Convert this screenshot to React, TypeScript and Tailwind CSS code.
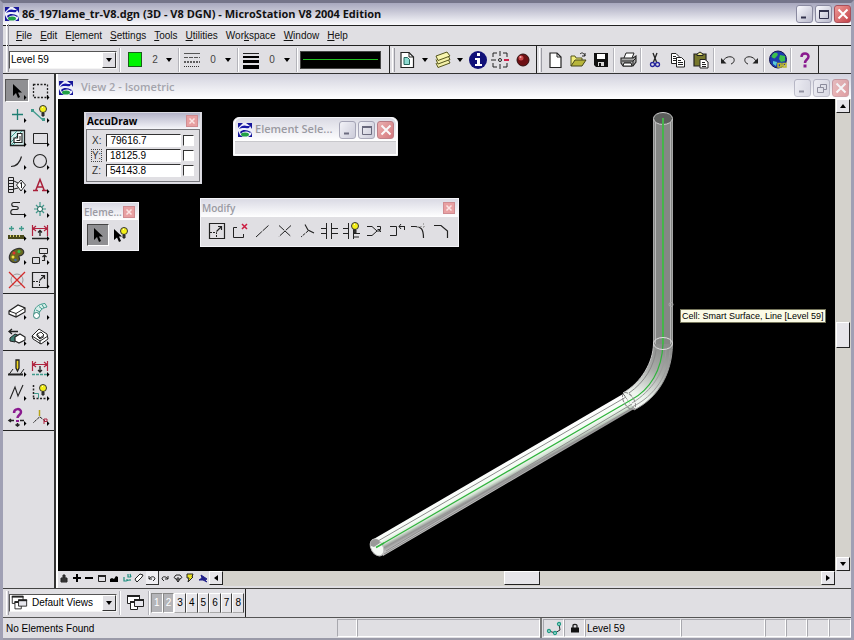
import { ReactNode } from "react";

interface IconProps {
  children: ReactNode;
  size?: number;
  box?: number;
  smooth?: boolean;
}

/* 20x20 drawing grid shared by every toolbar glyph */
function Icon({ children, size = 20, box = 20, smooth = true }: IconProps) {
  return (
    <svg
      width={size}
      height={size}
      viewBox={`0 0 ${box} ${box}`}
      fill="none"
      stroke="#222"
      strokeWidth="1"
      shapeRendering={smooth ? "auto" : "crispEdges"}
      className="block shrink-0"
      aria-hidden="true"
    >
      {children}
    </svg>
  );
}

const teal = "#3f9a8c";

/* ---------- shared drawings ---------- */

function Logo() {
  return (
    <Icon size={16} box={16}>
      <rect x="1" y="1" width="14" height="14" fill="#eef0fb" stroke="none" />
      <path d="M1 1H6L3 4L1 6ZM9 1H15V7L13 4ZM1 9L3 13L6 15H1ZM15 10V15H11L14 13Z" fill="#16169a" stroke="none" />
      <path d="M2 7C4 3 8 3 10 4L13 4L12 6C9 7 6 5 2 7Z" fill="#1717a8" stroke="none" />
      <path d="M3 10C6 7 10 8 14 10L13 11C10 9 6 9 4 12Z" fill="#16169a" stroke="none" />
      <ellipse cx="8" cy="12.500" rx="4" ry="2" fill="#22a045" stroke="none" />
    </Icon>
  );
}

const cursorPath = "M6 3V15L9 12L11 17L13 16L11 11.500H15Z";

const pointer = <path d={cursorPath} fill="#000" stroke="none" />;

function Bulb({ x, y }: { x: number; y: number }) {
  return (
    <g transform={`translate(${x} ${y})`}>
      <circle cx="4" cy="4" r="3.500" fill="#f4f018" stroke="#333" />
      <path d="M3 8H5V11H3Z" fill="#444" stroke="#222" />
      <path d="M3 2.500L4 2" stroke="#fff" />
    </g>
  );
}

const scaleBox = (
  <>
    <path d="M2.500 2.500H17.500V17.500H2.500Z" strokeWidth="1.200" />
    <path d="M3 11.500H9.500V17" strokeDasharray="2 1" />
    <path d="M9.500 10.500L14.500 5.500M11 5.500H14.500V9" strokeWidth="1.200" />
  </>
);

const cascade = (
  <>
    <path d="M2.500 2.500H14.500V10.500H2.500Z" fill="#fff" />
    <path d="M2 3H15" strokeWidth="2" />
    <path d="M5.500 8.500H12.500V16.500H5.500Z" fill="#fff" />
    <path d="M5 9H13" strokeWidth="2" />
    <path d="M9.500 6.500H18.500V13.500H9.500Z" fill="#e8e8ee" />
    <path d="M9 7H19" strokeWidth="2" />
  </>
);

/* ---------- left tool palette ---------- */

interface Tool {
  name: string;
  art: ReactNode;
  active?: boolean;
}

const mainTools: Tool[] = [
  { name: "Element Selection", art: pointer, active: true },
  { name: "Fence", art: <path d="M3.500 3.500H17.500V16.500H3.500Z" strokeDasharray="2 1.500" strokeWidth="1.300" /> },
  { name: "Points", art: <path d="M10.500 5V16M5 10.500H16" stroke="#1f7f73" strokeWidth="1.300" /> },
  {
    name: "Linear Elements",
    art: (
      <>
        <path d="M3 7L13 16" stroke={teal} strokeWidth="1.300" />
        <path d="M1 5H4V8H1ZM12 14H15V17H12Z" fill={teal} stroke="none" />
        <Bulb x={9} y={1} />
      </>
    ),
  },
  {
    name: "Patterns",
    art: (
      <>
        <path d="M3.500 2.500H17.500V17.500H3.500Z" fill="#d6eeee" strokeWidth="1.300" />
        <path d="M4 9L10 3M4 14L15 3M6 17L9 14M4 17L8 13" stroke={teal} />
        <path d="M7 14.500V10H10.500V5.500H15V14.500Z" fill="#fff" strokeWidth="1.200" />
        <path d="M9.500 12.500H13V8" />
      </>
    ),
  },
  { name: "Polygons", art: <path d="M3.500 5.500H17.500V15.500H3.500Z" /> },
  { name: "Arcs", art: <path d="M4 15.500C10 15.500 13 11 14.500 5.500" strokeWidth="1.200" /> },
  { name: "Ellipses", art: <circle cx="10" cy="10" r="6.500" strokeWidth="1.100" /> },
  {
    name: "Tags",
    art: (
      <>
        <path d="M1.500 2.500H6.500V17.500H1.500ZM1.500 5.500H6.500M1.500 8.500H6.500M1.500 11.500H6.500M1.500 14.500H6.500" />
        <path d="M7 6L11 8M7 14L11 13" />
        <path d="M14 5L18.500 10L14 16L9.500 10Z" fill="#fff" />
        <path d="M13 8.500L14.500 7.500V13" />
      </>
    ),
  },
  { name: "Text", art: <path d="M5.500 16L10 4.500L14.500 16M7 12H13M3 15.500H8M12 15.500H17" stroke="#a91e38" strokeWidth="1.500" /> },
  { name: "Groups", art: <path d="M13 3.500H7C4 3.500 4 7.500 7 7.500H9C12 7.500 12 10.500 9 10.500H6C3 11 3 15.500 6 15.500H17" strokeWidth="1.100" /> },
  {
    name: "Cells",
    art: (
      <>
        <path d="M10 3V17M4 10H16M6 6L14 14M14 6L6 14" stroke={teal} strokeWidth="1.200" />
        <circle cx="10" cy="10" r="2.500" fill="#fff" stroke="#1f5f55" />
      </>
    ),
  },
  {
    name: "Measure",
    art: (
      <>
        <path d="M4.500 4V9M2 6.500H7M14.500 4V9M12 6.500H17" stroke={teal} strokeWidth="1.300" />
        <path d="M1 13H17V17H1Z" fill="#4a4a1c" stroke="none" />
        <path d="M3.500 13V15M6.500 13V15M9.500 13V15M12.500 13V15" stroke="#d8d06a" />
      </>
    ),
  },
  {
    name: "Dimensions",
    art: (
      <>
        <path d="M2.500 3V14M17.500 3V14M3 6.500H17M6 4L3 6.500L6 9M14 4L17 6.500L14 9" stroke="#b02440" strokeWidth="1.200" />
        <path d="M10 14V8M8 10.500L10 8.500L12 10.500M2 16.500H18" strokeWidth="1.300" />
      </>
    ),
  },
  {
    name: "Change Attributes",
    art: (
      <>
        <path d="M9 3C15 1 18 5 16 8S11 9 12 11C14 15 9 18 5 16S1 6 9 3Z" fill="#6a6a20" stroke="#333" strokeWidth="1.200" />
        <circle cx="7" cy="7" r="1.500" fill="#d33" stroke="none" />
        <circle cx="12" cy="5.500" r="1.500" fill="#3ac04c" stroke="none" />
        <circle cx="6" cy="11" r="1.500" fill="#f0e040" stroke="none" />
        <circle cx="8.500" cy="14" r="1.300" fill="#46a" stroke="none" />
      </>
    ),
  },
  {
    name: "Manipulate",
    art: (
      <>
        <path d="M9.500 2.500H17.500V7.500H9.500ZM2.500 11.500H9.500V17.500H2.500Z" />
        <path d="M12 14.500H14.500V9M12.500 11L14.500 9L16.500 11" strokeWidth="1.200" />
      </>
    ),
  },
  {
    name: "Delete Element",
    art: (
      <>
        <circle cx="10" cy="10" r="6" stroke="#999" />
        <path d="M2 2L18 18M18 2L2 18" stroke="#d42a2a" strokeWidth="1.300" />
      </>
    ),
  },
  { name: "Modify", art: scaleBox },
];

const solidTools: Tool[] = [
  {
    name: "3D Primitives",
    art: (
      <>
        <path d="M2 10L11 4L18 7V11L9 16L2 13Z" fill="#fff" strokeWidth="1.200" />
        <path d="M2 10L9 12.500L18 7M9 12.500V16" />
      </>
    ),
  },
  {
    name: "3D Free-form Surfaces",
    art: (
      <>
        <path d="M4 13C4 6 9 3 15 2.500L17 6C12 7 9 10 9 14" fill="#d9eeea" stroke={teal} />
        <path d="M6 9L10 11M9 5.500L12 8M12 3.500L14 7" stroke={teal} />
        <circle cx="6.500" cy="14.500" r="3" fill="#fff" stroke="#2c8173" />
      </>
    ),
  },
  {
    name: "3D Modify",
    art: (
      <>
        <path d="M2 4.500H11M5 2L2 4.500L5 7" strokeWidth="1.300" />
        <path d="M3 11L8 7L13 9L8 15L3 14Z" fill="#3f7f74" />
        <path d="M8 10L13 7L18 10V13L12 16L8 14Z" fill="#fff" strokeWidth="1.200" />
      </>
    ),
  },
  {
    name: "Surface Modeling",
    art: (
      <>
        <path d="M2 9L9 2L17 7L18 12L11 17L3 12Z" fill="#fff" />
        <path d="M2 9L10 14L18 9M10 14V17M7 7L11 5L14 8L10 11ZM7 7V9L10 12L14 9.500" />
      </>
    ),
  },
];

const drawingTools: Tool[] = [
  {
    name: "DD Design",
    art: (
      <>
        <path d="M9 2H12V10L10.500 13L9 10Z" fill="#f0d820" strokeWidth="1.300" />
        <path d="M6 11L2 16.500H13L17 11" />
        <path d="M1 16.500H16" strokeWidth="2" />
      </>
    ),
  },
  {
    name: "Constraints",
    art: (
      <>
        <path d="M2.500 3V13M17.500 3V13M3 6.500H17M6 4L3 6.500L6 9M14 4L17 6.500L14 9" stroke="#b02440" strokeWidth="1.200" />
        <path d="M10 8V14M8 12L10 14L12 12" strokeWidth="1.300" />
        <path d="M2 16.500H18" stroke={teal} strokeDasharray="3 1" strokeWidth="1.500" />
      </>
    ),
  },
  { name: "Stretch Lines", art: <path d="M3 17L8 5L11 14L16 3" strokeWidth="1.100" /> },
  {
    name: "Modify Values",
    art: (
      <>
        <path d="M3.500 3V17" strokeDasharray="2 1.500" strokeWidth="1.500" />
        <path d="M3 16.500H17" strokeDasharray="2 1.500" strokeWidth="1.500" />
        <path d="M4 11.500H8.500V16" stroke={teal} />
        <Bulb x={9} y={2} />
      </>
    ),
  },
  {
    name: "Describe",
    art: (
      <>
        <path d="M7 6C7 1 14 1 14 5C14 8 10.500 8 10.500 11" stroke="#8a1a8f" strokeWidth="2.500" />
        <path d="M9 13H12V15H9Z" fill="#8a1a8f" stroke="none" />
        <path d="M2 13.500H7M13 13.500H17M4 12L2 13.500L4 15M8.500 17.500L10.500 19L12.500 17.500M10.500 16V19" strokeWidth="1.500" />
      </>
    ),
  },
  {
    name: "Dimension Driven Axes",
    art: (
      <>
        <path d="M9.500 10L3 16M10 10L15 14" strokeDasharray="3 1" />
        <path d="M9.500 3V9" stroke="#b8a418" strokeWidth="1.500" />
        <path d="M14 17V12H17V14.500H14" stroke="#b02440" />
      </>
    ),
  },
];

function ToolGroup({ tools, className }: { tools: Tool[]; className: string }) {
  return (
    <div className={`grid grid-cols-2 content-between border-b border-[#222] px-[2px] pt-[5px] pb-[2px] ${className}`}>
      {tools.map((tool) => (
        <button
          key={tool.name}
          aria-label={tool.name}
          className={`relative flex h-[23px] items-center justify-center ${
            tool.active ? "border border-t-[#555] border-l-[#555] border-r-white border-b-white bg-[#8f8f92]" : ""
          }`}
        >
          <Icon>
            {tool.art}
            {tool.name !== "Delete Element" && <path d="M17 14V19L19.500 16.500Z" fill="#000" stroke="none" />}
          </Icon>
        </button>
      ))}
    </div>
  );
}

/* ---------- window chrome ---------- */

type Faded = "no" | "soft" | "strong";

function CaptionButton({ kind, faded = "no" }: { kind: "min" | "max" | "restore" | "close"; faded?: Faded }) {
  const look =
    kind === "close"
      ? "from-[#ee9a98] to-[#c4414a] border-[#a8505a]"
      : "from-[#fbfbff] to-[#b9b9cb] border-[#8a8aa0]";
  const fade = faded === "strong" ? "opacity-50" : faded === "soft" ? "opacity-70" : "";
  return (
    <button
      aria-label={kind}
      className={`flex h-[18px] w-[17px] items-center justify-center rounded-[3px] border bg-gradient-to-br ${look} ${fade}`}
    >
      <Icon size={14} box={14}>
        {kind === "min" && <path d="M3 10.500H8" stroke="#33334d" strokeWidth="2" />}
        {kind === "max" && (
          <>
            <path d="M2.500 3.500H11.500V11.500H2.500Z" stroke="#33334d" />
            <path d="M2 4H12" stroke="#33334d" strokeWidth="2" />
          </>
        )}
        {kind === "restore" && <path d="M5.500 6V3.500H11.500V8.500H9M2.500 6.500H8.500V11.500H2.500Z" stroke="#33334d" />}
        {kind === "close" && <path d="M2.500 2.500L11.500 11.500M11.500 2.500L2.500 11.500" stroke="#fff" strokeWidth="2" />}
      </Icon>
    </button>
  );
}

function SmallClose({ label }: { label: string }) {
  return (
    <button
      aria-label={label}
      className="flex h-[12px] w-[12px] items-center justify-center border border-[#d08c92] bg-[#e8a0a2]"
    >
      <Icon size={8} box={8}>
        <path d="M1.500 1.500L6.500 6.500M6.500 1.500L1.500 6.500" stroke="#fbe6e6" strokeWidth="1.500" />
      </Icon>
    </button>
  );
}

function Caret() {
  return (
    <span className="flex w-[14px] shrink-0 justify-center">
      <svg width="6" height="4" viewBox="0 0 6 4" aria-hidden="true">
        <path d="M0 0H6L3 4Z" fill="#000" />
      </svg>
    </span>
  );
}

function Divider({ wide }: { wide?: boolean }) {
  return (
    <div className={`h-6 w-[2px] shrink-0 border-l border-[#b4b4ba] bg-white ${wide ? "mx-[2px]" : "mx-[1px]"}`} />
  );
}

function Grip() {
  return <div className="h-6 w-[3px] shrink-0 border-x border-l-white border-r-[#9c9ca4]" />;
}

function Combo({ label, value, icon }: { label: string; value: string; icon?: ReactNode }) {
  return (
    <div className="relative flex h-[18px] w-[108px] border border-t-[#555] border-l-[#555] border-r-[#f4f4f4] border-b-[#f4f4f4] bg-white">
      {icon && <span className="absolute left-0 -top-px">{icon}</span>}
      <select
        aria-label={label}
        className={`w-full appearance-none bg-transparent text-[10px] leading-4 text-black outline-none ${icon ? "pl-[22px]" : "pl-[1px]"}`}
      >
        <option>{value}</option>
      </select>
      <span className="pointer-events-none absolute right-0 flex h-4 w-[14px] items-center justify-center border border-t-white border-l-white border-r-[#333] border-b-[#333] bg-[#e0dfe3]">
        <Caret />
      </span>
    </div>
  );
}

/* ---------- main toolbar ---------- */

function ToolButton({ name, narrow, children }: { name: string; narrow?: boolean; children: ReactNode }) {
  return (
    <button
      aria-label={name}
      className={`flex h-6 shrink-0 items-center justify-center ${narrow ? "w-[21px]" : "w-[23px]"}`}
    >
      <Icon>{children}</Icon>
    </button>
  );
}

function AttributesBar() {
  return (
    <div className="flex items-center border-r border-[#222] pl-[3px]">
      <Grip />
      <Combo label="Active Level" value="Level 59" />
      <Divider wide />
      <button aria-label="Active Color" className="flex items-center">
        <span className="ml-[5px] h-[15px] w-[14px] border border-[#1c5c1c] bg-[#00f400]" />
        <span className="ml-[6px] w-[14px] text-center text-[10px] text-[#444]">2</span>
        <Caret />
      </button>
      <Divider wide />
      <button aria-label="Active Line Style" className="flex items-center">
        <Icon>
          <path d="M2 3.500H18" stroke="#555" />
          <path d="M2 7.500H18" stroke="#555" strokeDasharray="4 1" />
          <path d="M2 12H18" stroke="#333" strokeWidth="1.500" strokeDasharray="2 1" />
          <path d="M2 16.500H18" stroke="#333" strokeDasharray="1 1" />
        </Icon>
        <span className="ml-[3px] w-4 text-center text-[10px] text-[#444]">0</span>
        <Caret />
      </button>
      <Divider wide />
      <button aria-label="Active Line Weight" className="flex items-center">
        <Icon smooth={false}>
          <path d="M2 3.500H18" />
          <path d="M2 7H18" stroke="#000" strokeWidth="2" />
          <path d="M2 11.500H18" stroke="#000" strokeWidth="3" />
          <path d="M2 17H18" stroke="#000" strokeWidth="4" />
        </Icon>
        <span className="ml-[3px] w-4 text-center text-[10px] text-[#444]">0</span>
        <Caret />
      </button>
      <Divider wide />
      <div className="mr-2 flex h-[18px] w-[81px] items-center border border-[#444] bg-black px-[2px]">
        <div className="h-px w-full bg-[#22c022]" />
      </div>
    </div>
  );
}

function PrimaryBar() {
  return (
    <div className="flex items-center border-r border-[#222] pl-[2px]">
      <Grip />
      <ToolButton name="Models">
        <path d="M4 2.500H12L16.500 7V17.500H4Z" fill="#fff" strokeWidth="1.200" />
        <path d="M12 2.500V7H16.500" />
        <path d="M7 7.500H10.500L12.500 9.500V14.500H7Z" fill="#8edbd2" stroke="#26665c" />
      </ToolButton>
      <Caret />
      <ToolButton name="References" narrow>
        <path d="M3 13L5 17.500L17 13L15 9" fill="#f4f0a8" stroke="#55551c" />
        <path d="M3 9.500L5 14L17 9.500L15 5.500" fill="#f4f0a8" stroke="#55551c" />
        <path d="M3 6L14 2L17 6L5 10.500Z" fill="#f8f5b0" stroke="#55551c" />
      </ToolButton>
      <Caret />
      <ToolButton name="Element Information" narrow>
        <circle cx="10" cy="10" r="9" fill="#101078" stroke="none" />
        <path d="M9 3H12V6H9ZM7 8H12V14H14V16H7V14H9V10H7Z" fill="#fff" stroke="none" />
      </ToolButton>
      <ToolButton name="Toggle AccuDraw">
        <path d="M3 7V3H7M13 3H17V7M17 13V17H13M7 17H3V13M10 1V6M10 14V19M1 10H6" />
        <path d="M14 10H19" stroke="#d0204a" strokeWidth="2" />
        <circle cx="10" cy="10" r="1.500" />
      </ToolButton>
      <ToolButton name="Popset">
        <circle cx="10" cy="10" r="6" fill="#6e1014" stroke="#301010" />
        <circle cx="8" cy="8" r="2.500" fill="#c9484a" stroke="none" />
        <circle cx="7.500" cy="7" r="1" fill="#f3b0b0" stroke="none" />
      </ToolButton>
      <div className="w-[2px]" />
    </div>
  );
}

function StandardBar() {
  return (
    <div className="flex items-center border-r border-[#222] pl-[2px]">
      <Grip />
      <div className="w-[1px]" />
      <ToolButton name="New File">
        <path d="M5 3H12L16 7V17.500H5Z" fill="#fff" strokeWidth="1.200" />
        <path d="M12 3V7H16" />
      </ToolButton>
      <ToolButton name="Open File">
        <path d="M3 16V6H7L8 8H14V10" fill="#f2ee7c" stroke="#55551c" />
        <path d="M3 16L7 10H18L14 16Z" fill="#b7b53a" stroke="#44441a" />
        <path d="M12 4C14 2 16 3 17 6M17 3V6H14" />
      </ToolButton>
      <ToolButton name="Save Settings">
        <path d="M3 3H17V17H5L3 15Z" fill="#111" stroke="none" />
        <path d="M6 4H14V9H6Z" fill="#fff" stroke="none" />
        <path d="M7 12H13V16H7Z" fill="#d8d8d8" stroke="none" />
        <path d="M8 13H10V16H8Z" fill="#111" stroke="none" />
      </ToolButton>
      <Divider />
      <ToolButton name="Print">
        <path d="M6 8L8 3H16L14 8" fill="#fff" />
        <path d="M3 8H15L18 6V12L15 16H5L3 13Z" fill="#aaa" strokeWidth="1.100" />
        <path d="M4 11H15L18 8M6 13H13M15 11V16" />
        <path d="M5 16L6 13H13L14 16Z" fill="#fff" />
      </ToolButton>
      <Divider />
      <ToolButton name="Cut">
        <path d="M8 3L11.500 12M12 3L8.500 12" strokeWidth="1.300" />
        <circle cx="7.500" cy="14.500" r="2" stroke="#26269e" strokeWidth="1.300" />
        <circle cx="12.500" cy="14.500" r="2" stroke="#26269e" strokeWidth="1.300" />
      </ToolButton>
      <ToolButton name="Copy">
        <path d="M3.500 3.500H8L11 6.500V13.500H3.500Z" fill="#fff" />
        <path d="M5 6.500H8M5 8.500H9M5 10.500H9" />
        <path d="M8.500 7.500H13.500L16.500 10.500V17H8.500Z" fill="#fff" />
        <path d="M10 10.500H13M10 12.500H15M10 14.500H15" />
      </ToolButton>
      <ToolButton name="Paste">
        <path d="M3 4H15V16H3Z" fill="#77772c" strokeWidth="1.200" />
        <path d="M6 5.500V4L9 2L12 4V5.500Z" fill="#e6e28a" />
        <path d="M9 9.500H14L17 12V18H9Z" fill="#fff" />
        <path d="M11 12.500H14M11 14.500H15M11 16.500H15" />
      </ToolButton>
      <Divider />
      <ToolButton name="Undo">
        <path d="M5 11C8 6 13 6 15.500 8C17 10 16 13 13 14" />
        <path d="M3 8V13.500H8.500Z" fill="#222" stroke="none" />
      </ToolButton>
      <ToolButton name="Redo">
        <path d="M15 11C12 6 7 6 4.500 8C3 10 4 13 7 14" />
        <path d="M17 8V13.500H11.500Z" fill="#222" stroke="none" />
      </ToolButton>
      <Divider />
      <ToolButton name="Connect Web Browser">
        <circle cx="10" cy="9.500" r="8.500" fill="#1c3cae" stroke="#151550" />
        <path d="M6 3C9 2 11 4 9 6S7 9 5 8S3 6 6 3Z" fill="#3cc04c" stroke="none" />
        <path d="M12 5L17 6L17 11L13 12L11 9Z" fill="#3cc04c" stroke="none" />
        <path d="M5 11L9 12L8 16L5 14Z" fill="#57c8d8" stroke="none" />
        <path d="M10 13.500H13V17H10ZM15 13.500H18V17H15ZM12 15.500H16" stroke="#b9b530" strokeWidth="1.500" />
      </ToolButton>
      <Divider />
      <ToolButton name="Help">
        <path d="M6.500 7C6.500 2.500 13.500 2.500 13.500 6.500C13.500 9.500 10 9.500 10 13" stroke="#8a1a8f" strokeWidth="2.500" />
        <path d="M8.500 14.500H11.500V17.500H8.500Z" fill="#8a1a8f" stroke="none" />
      </ToolButton>
      <div className="w-[2px]" />
    </div>
  );
}

/* ---------- floating tool boxes ---------- */

function AccuDraw() {
  const rows = [
    { axis: "X", value: "79616.7" },
    { axis: "Y", value: "18125.9" },
    { axis: "Z", value: "54143.8" },
  ];
  return (
    <section className="absolute top-[13px] left-[26px] w-[118px] border border-[#d8d8e0] bg-[#e0dfe3] px-px pb-px">
      <header className="flex h-[16px] items-center justify-between bg-gradient-to-b from-[#b4b4c8] to-[#f6f6fa] pr-[2px] pl-[1px]">
        <h2 className="font-['Open_Sans',sans-serif] text-[10px] leading-4 font-bold text-black">AccuDraw</h2>
        <SmallClose label="Close AccuDraw" />
      </header>
      <div className="flex flex-col gap-[2px] border border-[#77777c] px-[5px] py-[4px]">
        {rows.map((row) => (
          <div key={row.axis} className="flex h-[13px] items-center">
            <label
              htmlFor={`axis-${row.axis}`}
              className={`w-[10px] text-center text-[10px] leading-[11px] text-[#333] ${row.axis === "Y" ? "outline outline-dotted outline-[#444]" : ""}`}
            >
              {row.axis}:
            </label>
            <input
              id={`axis-${row.axis}`}
              defaultValue={row.value}
              className="ml-[5px] h-[13px] w-[75px] border border-t-[#333] border-l-[#333] border-r-white border-b-white bg-white pl-[3px] text-[10px] leading-[11px] outline-none"
            />
            <input
              type="checkbox"
              aria-label={`Lock ${row.axis}`}
              className="ml-[2px] h-[11px] w-[11px] shrink-0 appearance-none border border-t-[#333] border-l-[#333] border-r-white border-b-white bg-white"
            />
          </div>
        ))}
      </div>
    </section>
  );
}

function ElementSelection() {
  return (
    <section className="absolute top-[18px] left-[175px] w-[165px] rounded-t-md border border-[#f4f4f8] bg-white px-px pb-px">
      <header className="flex h-[23px] items-center gap-[2px] rounded-t-md bg-gradient-to-b from-[#dadae4] to-white px-[2px]">
        <Logo />
        <h2 className="flex-1 truncate font-['Open_Sans',sans-serif] text-[11px] font-semibold text-[#9a9aa2]">
          Element Sele...
        </h2>
        <CaptionButton kind="min" faded="soft" />
        <CaptionButton kind="max" faded="soft" />
        <CaptionButton kind="close" faded="soft" />
      </header>
      <div className="h-[13px] border-t border-[#c8c8cc] bg-[#e0dfe3]" />
    </section>
  );
}

function ElementsBox() {
  return (
    <section className="absolute top-[103px] left-[24px] w-[57px] border border-[#f4f4f8] bg-[#e0dfe3]">
      <header className="flex h-[17px] items-center justify-between bg-gradient-to-b from-[#dadae4] to-white pr-[3px] pl-[1px]">
        <h2 className="font-['Open_Sans',sans-serif] text-[10px] leading-4 font-semibold text-[#9a9aa2]">Eleme...</h2>
        <SmallClose label="Close Elements" />
      </header>
      <div className="flex gap-[1px] p-[4px]">
        <button
          aria-label="Element Selection tool"
          className="flex h-[22px] w-[22px] items-center justify-center border border-t-[#444] border-l-[#444] border-r-white border-b-white bg-[#8f8f92]"
        >
          <Icon>{pointer}</Icon>
        </button>
        <button aria-label="PowerSelector" className="flex h-[22px] w-[22px] items-center justify-center">
          <Icon>
            <path d="M3 4V15L6 12.500L8 17L10 16L8 11.500H11Z" fill="#000" stroke="none" />
            <Bulb x={9} y={2} />
          </Icon>
        </button>
      </div>
    </section>
  );
}

const modifyTools: Tool[] = [
  { name: "Modify Element", art: scaleBox },
  {
    name: "Break Element",
    art: (
      <>
        <path d="M7 6.500H3.500V16.500H13.500V13" />
        <path d="M12 3L17 8M17 3L12 8" stroke="#cc1c40" strokeWidth="1.500" />
      </>
    ),
  },
  { name: "Extend Line", art: <path d="M4 16L17 4" strokeDasharray="8 1" /> },
  {
    name: "Extend to Intersection",
    art: <path d="M4 4.500L10 10L4 15.500M16 4.500L10 10L16 15.500" strokeDasharray="7 1" />,
  },
  {
    name: "Extend to Element",
    art: (
      <>
        <path d="M8 3.500L11 9L17 12" strokeWidth="1.100" />
        <path d="M11 10L4 16" strokeDasharray="3 1" />
      </>
    ),
  },
  {
    name: "Trim Element",
    art: <path d="M7.500 2V18M12.500 2V18M2 7.500H7M13 7.500H19M2 12.500H7M13 12.500H19" />,
  },
  {
    name: "IntelliTrim",
    art: (
      <>
        <path d="M6.500 2V18M11.500 2V18M1 7.500H6M1 12.500H6M12 12.500H18M12 16H17" />
        <Bulb x={9} y={1} />
      </>
    ),
  },
  {
    name: "Insert Vertex",
    art: (
      <>
        <path d="M3 5.500H8L13 10L8 14.500H3" />
        <path d="M13 5.500H16.500V8.500H13.500M14 8L17 11M12 10H17" />
      </>
    ),
  },
  {
    name: "Delete Vertex",
    art: <path d="M3 5.500H9.500V14.500H3M12 5.500H17M14 3L12 5.500L14 8M17.500 5V9" />,
  },
  {
    name: "Construct Circular Fillet",
    art: (
      <>
        <path d="M2 5.500H6C12 5.500 14.500 8 14.500 17" strokeWidth="1.200" />
        <path d="M8 5.500H17M14.500 2V8" stroke="#aaa" strokeDasharray="2 1" />
      </>
    ),
  },
  { name: "Construct Chamfer", art: <path d="M2 4.500H9L15.500 10V17" strokeWidth="1.200" /> },
];

function ModifyBox() {
  return (
    <section className="absolute top-[99px] left-[142px] w-[259px] border border-[#f4f4f8] bg-[#e0dfe3]">
      <header className="flex h-[18px] items-center justify-between bg-gradient-to-b from-[#dadae4] to-white pr-[3px] pl-[1px]">
        <h2 className="font-['Open_Sans',sans-serif] text-[10px] leading-4 font-semibold text-[#9a9aa2]">Modify</h2>
        <SmallClose label="Close Modify" />
      </header>
      <div className="flex h-[29px] items-center px-[5px] pb-[2px]">
        {modifyTools.map((tool) => (
          <button key={tool.name} aria-label={tool.name} className="flex flex-1 justify-center">
            <Icon>{tool.art}</Icon>
          </button>
        ))}
      </div>
    </section>
  );
}

/* ---------- view window ---------- */

function Pipe() {
  return (
    <svg width="776" height="472" viewBox="58 99 776 472" fill="none" className="absolute top-0 left-0" aria-hidden="true">
      <defs>
        <linearGradient id="run" gradientUnits="userSpaceOnUse" x1="500" y1="464" x2="510" y2="482">
          <stop offset="0" stopColor="#fff" />
          <stop offset="0.450" stopColor="#f4fbf4" />
          <stop offset="0.650" stopColor="#d4e4d4" />
          <stop offset="0.820" stopColor="#949494" />
          <stop offset="1" stopColor="#c0c0c0" />
        </linearGradient>
        <linearGradient id="elbow" gradientUnits="userSpaceOnUse" x1="662" y1="346" x2="632" y2="402">
          <stop offset="0" stopColor="#8b8d8b" />
          <stop offset="0.400" stopColor="#a9aca9" />
          <stop offset="0.850" stopColor="#eef4ee" />
          <stop offset="1" stopColor="#f4f8f4" />
        </linearGradient>
      </defs>

      {/* riser */}
      <path d="M653.500 119V344H672.500V119Z" fill="#858785" />
      <path d="M653.500 119V344M672.500 119V344" stroke="#a6a6a6" />
      <path d="M655.500 122V344M670.500 122V344" stroke="#b9b9b9" />
      <ellipse cx="663" cy="118.500" rx="9.500" ry="6" fill="#5c5e5c" stroke="#d0d0d0" />
      <rect x="662" y="118" width="2" height="226" fill="#45b54a" />

      {/* elbow */}
      <path d="M653.500 344C653 362 642 382 623 393L634 410C658 398 672 374 672.500 344Z" fill="url(#elbow)" />
      <path d="M672.500 344C672 374 658 398 634 410M670 350C669 374 655 396 632 407M666 350C665 371 652 391 632 403" stroke="#9c9c9c" />
      <path d="M653.500 344C653 362 642 382 623 393" stroke="#c8c8c8" />
      <path d="M656 350C654 366 645 382 629 393" stroke="#888" />

      {/* sloped run */}
      <path d="M372 540L623 394L634 409L383 556Z" fill="url(#run)" />
      <path d="M378 541L626 397" stroke="#8c8c8c" />
      <path d="M386 551L632 404M384 554L634 407" stroke="#8f8f8f" />
      <path d="M377 547L631 400C650 390 662 370 663 344" stroke="#2fb33c" strokeWidth="1.200" />

      {/* joints and open end */}
      <ellipse cx="663" cy="343.500" rx="9.500" ry="6" stroke="#e2e2e2" />
      <ellipse cx="629" cy="401" rx="5" ry="9.500" transform="rotate(-32 629 401)" stroke="#8a8a8a" strokeDasharray="4 1" />
      <ellipse cx="377" cy="547.500" rx="6" ry="9" transform="rotate(-30 377 547.500)" fill="#f4f8f4" stroke="#bbb" />
      <path d="M371 546C369 541 374 538 379 540L380 543L374 547Z" fill="#999" />
      <path d="M376 547.500L384 543" stroke="#2fb33c" strokeWidth="1.500" />
      <circle cx="671" cy="304.500" r="2" stroke="#aaa" />
    </svg>
  );
}

function ScrollButton({ label, d }: { label: string; d: string }) {
  return (
    <button
      aria-label={label}
      className="flex h-[14px] w-[14px] shrink-0 items-center justify-center border border-t-white border-l-white border-r-[#222] border-b-[#222] bg-[#e6e5e9]"
    >
      <svg width="8" height="8" viewBox="0 0 8 8" aria-hidden="true">
        <path d={d} fill="#000" />
      </svg>
    </button>
  );
}

const viewControls: Tool[] = [
  { name: "Update View", art: <path d="M2 5H8V9H2ZM4 5V2H6V5M2 7H8" fill="#444" /> },
  { name: "Zoom In", art: <path d="M5 1V9M1 5H9" stroke="#000" strokeWidth="2" /> },
  { name: "Zoom Out", art: <path d="M1 5H9" stroke="#000" strokeWidth="2" /> },
  { name: "Window Area", art: <path d="M1.500 2.500H8.500V8.500H1.500ZM1 2.500H9M1 3.500H9" /> },
  { name: "Fit View", art: <path d="M1 9V6L3 5L5 6L7 3L9 4V9Z" fill="#000" stroke="none" /> },
  { name: "Rotate View", art: <path d="M2 4V8H5V6M4 8L7 7M6 1V4H9M8 1L9 4M8 6V8" stroke="#1f8f80" strokeWidth="1.200" /> },
  { name: "Pan View", art: <path d="M2 8L1 6L6 1L9 2L8 4L3 9Z" fill="#fff" /> },
  { name: "View Previous", art: <path d="M2 3V6H5M2 6C4 3 8 3 8 6L6 8" />, active: true },
  { name: "View Next", art: <path d="M8 3V6H5M8 6C6 3 2 3 2 6L4 8" /> },
  { name: "Change View Perspective", art: <path d="M1 4.500L3 2H7L9 4.500L7 6H3ZM3 6L5 9L7 6M5 4V9" /> },
  { name: "Render", art: <path d="M2 1H8L7 4H8L3 9L4 5H2Z" fill="#e8e020" /> },
  { name: "Navigate Camera", art: <path d="M1 7L4 5L3 2L6 4L9 6L7 7L9 9L5 7Z" fill="#22228c" stroke="#22228c" /> },
];

function ViewWindow() {
  return (
    <div className="flex min-w-0 flex-1 flex-col border-l-2 border-white bg-[#e0dfe3]">
      <header className="flex h-[25px] shrink-0 items-center gap-[7px] bg-gradient-to-b from-[#d2d2de] to-white pt-[2px] pr-[2px]">
        <Logo />
        <h2 className="flex-1 font-['Open_Sans',sans-serif] text-[11px] font-semibold text-[#a4a4ac]">View 2 - Isometric</h2>
        <div className="flex gap-[2px]">
          <CaptionButton kind="min" faded="strong" />
          <CaptionButton kind="restore" faded="strong" />
          <CaptionButton kind="close" faded="strong" />
        </div>
      </header>

      <div className="flex flex-1">
        <main className="relative flex-1 overflow-hidden bg-black">
          <Pipe />
          <AccuDraw />
          <ElementSelection />
          <ElementsBox />
          <ModifyBox />
          <div
            role="tooltip"
            className="absolute top-[210px] left-[622px] border border-[#77775c] bg-[#fbfbe6] px-px text-[9px] leading-[12px] whitespace-nowrap text-black"
          >
            Cell: Smart Surface, Line [Level 59]
          </div>
        </main>
        <div className="flex w-[16px] flex-col bg-[#d4d2cc] pl-px">
          <ScrollButton label="Scroll up" d="M1 6H7L4 2Z" />
          <div className="flex-1" />
          <div className="h-[26px] w-[14px] border border-t-white border-l-white border-r-[#222] border-b-[#222] bg-[#e6e5e9]" />
          <div className="flex-1" />
          <ScrollButton label="Scroll down" d="M1 2H7L4 6Z" />
        </div>
      </div>

      <div className="flex h-[17px] shrink-0 items-start pr-[16px]">
        <div className="flex w-[151px]">
          {viewControls.map((tool) => (
            <button
              key={tool.name}
              aria-label={tool.name}
              className={`flex h-[14px] flex-1 items-center justify-center ${
                tool.active ? "border-r border-b border-[#333] bg-[#f0eff3]" : ""
              }`}
            >
              <Icon size={10} box={10}>
                {tool.art}
              </Icon>
            </button>
          ))}
        </div>
        <ScrollButton label="Scroll left" d="M6 1V7L2 4Z" />
        <div className="flex h-[15px] flex-1 bg-[#d4d2cc]">
          <div className="flex-1" />
          <div className="h-[14px] w-[36px] border border-t-white border-l-white border-r-[#222] border-b-[#222] bg-[#e6e5e9]" />
          <div className="flex-1" />
          <ScrollButton label="Scroll right" d="M2 1V7L6 4Z" />
        </div>
      </div>
    </div>
  );
}

/* ---------- bottom bars ---------- */

function ViewGroups() {
  const views = [1, 2, 3, 4, 5, 6, 7, 8];
  return (
    <div className="flex h-[29px] shrink-0 border-b border-[#555]">
      <div className="flex items-center border-r border-[#222] pr-[1px] pl-[3px]">
        <Grip />
        <Combo label="View Group" value="Default Views" icon={<Icon size={18}>{cascade}</Icon>} />
        <Divider wide />
        <button aria-label="Manage View Groups" className="mx-[2px]">
          <Icon>{cascade}</Icon>
        </button>
        <Divider />
        <div className="flex w-[93px]">
          {views.map((n) => (
            <button
              key={n}
              className={`h-[20px] flex-1 border text-center text-[10px] leading-[18px] ${
                n < 3
                  ? "border-t-[#888] border-l-[#888] border-r-white border-b-white bg-[#b4b4b8] text-white"
                  : "border-t-white border-l-white border-r-[#444] border-b-[#aaa] bg-[#e6e5e9] text-black"
              }`}
            >
              {n}
            </button>
          ))}
        </div>
      </div>
    </div>
  );
}

function StatusCell({ className, children }: { className: string; children?: ReactNode }) {
  return (
    <div
      className={`flex h-[18px] shrink-0 items-center border border-t-[#a8a8ae] border-l-[#a8a8ae] border-r-white border-b-white ${className}`}
    >
      {children}
    </div>
  );
}

function StatusBar() {
  return (
    <footer className="flex h-[22px] shrink-0 items-center border-b-2 border-[#9a9aa8] text-[10px] text-black">
      <span className="flex-1 pl-[3px]">No Elements Found</span>
      <StatusCell className="w-[20px]" />
      <StatusCell className="w-[183px]" />
      <div className="mr-[1px] h-full w-[2px] bg-[#777]" />
      <StatusCell className="w-[21px] justify-center">
        <Icon size={16} box={16}>
          <path d="M3 11L9 13L14 10L13 4" stroke="#333" />
          <g fill="#d6f4ee" stroke="#1f9a84" strokeWidth="1.300">
            <circle cx="3" cy="11" r="1.500" />
            <circle cx="9" cy="13" r="1.500" />
            <circle cx="13" cy="4" r="1.500" />
          </g>
        </Icon>
      </StatusCell>
      <StatusCell className="w-[21px] justify-center">
        <Icon size={10} box={10}>
          <path d="M3 5V2.500C3 1 7 1 7 2.500V5" strokeWidth="1.300" />
          <path d="M1 4.500H9V9.500H1Z" fill="#111" stroke="none" />
        </Icon>
      </StatusCell>
      <StatusCell className="w-[96px] pl-[1px]">Level 59</StatusCell>
      <StatusCell className="w-[84px]" />
      <StatusCell className="w-[21px]" />
      <StatusCell className="w-[21px]" />
      <StatusCell className="w-[22px]" />
      <StatusCell className="w-[22px]" />
    </footer>
  );
}

const menus = [
  ["", "F", "ile"],
  ["", "E", "dit"],
  ["E", "l", "ement"],
  ["", "S", "ettings"],
  ["", "T", "ools"],
  ["", "U", "tilities"],
  ["Wor", "k", "space"],
  ["", "W", "indow"],
  ["", "H", "elp"],
];

export default function App() {
  return (
    <div className="flex min-h-screen flex-col border-t-[3px] border-r-[3px] border-l-[3px] border-t-[#75758a] border-r-[#a0a0b4] border-l-[#a0a0b4] bg-[#e0dfe3] font-['Liberation_Sans',sans-serif]">
      {/* TITLE BAR */}
      <header className="flex h-[23px] shrink-0 items-center gap-[2px] border-b border-[#222] bg-gradient-to-b from-[#a8a8be] to-[#fbfbfd] pl-[1px]">
        <Logo />
        <h1 className="flex-1 truncate font-['Open_Sans',sans-serif] text-[11px] font-bold text-[#111]">
          86_197lame_tr-V8.dgn (3D - V8 DGN) - MicroStation V8 2004 Edition
        </h1>
        <div className="flex gap-[2px]">
          <CaptionButton kind="min" />
          <CaptionButton kind="max" />
          <CaptionButton kind="close" />
        </div>
      </header>

      {/* MENU */}
      <nav className="flex h-[20px] shrink-0 items-center border-b border-[#222] pl-[3px] text-[10px] text-[#111]">
        <Grip />
        <div className="ml-[7px] flex gap-[8px]">
          {menus.map(([before, key, after]) => (
            <button key={before + key + after}>
              {before}
              <span className="underline">{key}</span>
              {after}
            </button>
          ))}
        </div>
      </nav>

      {/* TOOLBARS */}
      <div className="flex h-[28px] shrink-0 border-b border-[#333]">
        <AttributesBar />
        <PrimaryBar />
        <StandardBar />
      </div>

      {/* PALETTE + VIEW */}
      <div className="flex flex-1">
        <aside className="w-[53px] shrink-0 border-r-2 border-[#333]">
          <ToolGroup tools={mainTools} className="h-[220px]" />
          <ToolGroup tools={solidTools} className="h-[57px]" />
          <ToolGroup tools={drawingTools} className="h-[80px]" />
        </aside>
        <ViewWindow />
      </div>

      <div className="border-t border-[#444]">
        <ViewGroups />
        <StatusBar />
      </div>
    </div>
  );
}
